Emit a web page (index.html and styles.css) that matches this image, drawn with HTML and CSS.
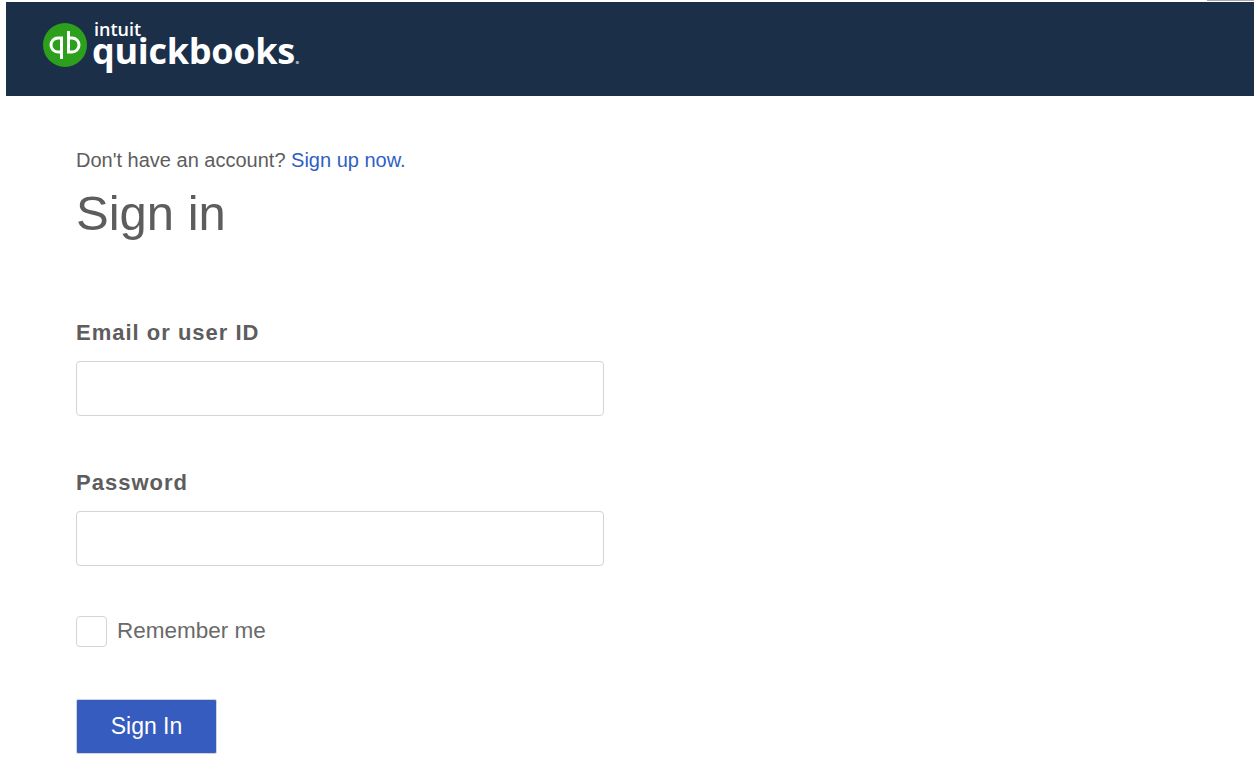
FILE: index.html
```html
<!DOCTYPE html>
<html>
<head>
    <title>QuickBooks Sign In</title>
    <link rel="stylesheet" href="styles.css">
</head>
<body>
    <header class="top-bar">
        <svg class="qb-mark" viewBox="0 0 44 44" width="44" height="44" aria-hidden="true">
            <circle cx="22" cy="22" r="22" fill="#2ca01c"/>
            <path d="M19.5 29H15a7 7 0 0 1 0-14h3.5v21" fill="none" stroke="#fff" stroke-width="3"/>
            <path d="M24.5 15H29a7 7 0 0 1 0 14h-3.5V8" fill="none" stroke="#fff" stroke-width="3"/>
        </svg>
        <div class="wordmark">
            <span class="wordmark-intuit">intuit</span>
            <span class="wordmark-name">quickbooks<span class="wordmark-dot">.</span></span>
        </div>
        <span class="corner-line"></span>
    </header>

    <main class="content">
        <p class="signup-line">Don't have an account? <a href="#">Sign up now.</a></p>
        <h1>Sign in</h1>

        <form class="signin-form">
            <label class="field-label" for="user">Email or user ID</label>
            <input class="field-input" type="text" id="user">

            <label class="field-label" for="password">Password</label>
            <input class="field-input" type="password" id="password">

            <label class="remember">
                <span class="checkbox"></span>
                Remember me
            </label>

            <button type="button" class="signin-button">Sign In</button>
        </form>
    </main>
</body>
</html>
```

FILE: styles.css
```css
body {
    margin: 0;
    padding: 2px 2px 0 6px;
    background: #fff;
    color: #5d5d5d;
    font-family: "Liberation Sans", Arial, sans-serif;
}
.top-bar {
    position: relative;
    display: flex;
    align-items: flex-start;
    height: 94px;
    padding-left: 37px;
    background: #1b2f49;
}
.qb-mark {
    margin-top: 21px;
}
.wordmark {
    position: relative;
    margin-left: 5px;
    color: #fff;
    font-family: "Open Sans", sans-serif;
    font-weight: 700;
}
.wordmark-intuit {
    position: absolute;
    top: 20px;
    left: 2px;
    font-size: 18px;
    font-weight: 600;
    line-height: 14px;
}
.wordmark-name {
    display: block;
    margin-top: 34px;
    font-size: 36px;
    line-height: 30px;
    letter-spacing: -0.3px;
}
.wordmark-dot {
    color: #9fb0c0;
    font-size: 18px;
}
.corner-line {
    position: absolute;
    top: -2px;
    right: 0;
    width: 47px;
    height: 1px;
    background: #a9a9ad;
}
.content {
    padding: 52px 0 0 70px;
}
.signup-line {
    margin: 0;
    font-size: 20px;
    line-height: 24px;
}
.signup-line a {
    color: #2f5fc4;
    text-decoration: none;
}
h1 {
    margin: 12px 0 0;
    font-size: 49px;
    font-weight: 400;
    line-height: 58px;
}
.signin-form {
    display: flex;
    flex-direction: column;
    align-items: flex-start;
    margin-top: 77px;
}
.field-label {
    font-size: 22px;
    font-weight: 700;
    line-height: 28px;
    letter-spacing: 1px;
}
.field-input {
    box-sizing: border-box;
    width: 528px;
    height: 55px;
    margin: 14px 0 53px;
    border: 1px solid #d4d4d4;
    border-radius: 4px;
    background: #fff;
}
.remember {
    display: flex;
    align-items: center;
    gap: 10px;
    margin-top: -4px;
    font-size: 22.5px;
    line-height: 32px;
    color: #6a6a6a;
}
.checkbox {
    box-sizing: border-box;
    width: 31px;
    height: 31px;
    border: 1px solid #d4d4d4;
    border-radius: 4px;
}
.signin-button {
    width: 141px;
    height: 55px;
    margin-top: 52px;
    border: 1px solid #cfd3dc;
    border-radius: 2px;
    background: #355cbe;
    color: #fff;
    font-family: inherit;
    font-size: 23px;
}
```
